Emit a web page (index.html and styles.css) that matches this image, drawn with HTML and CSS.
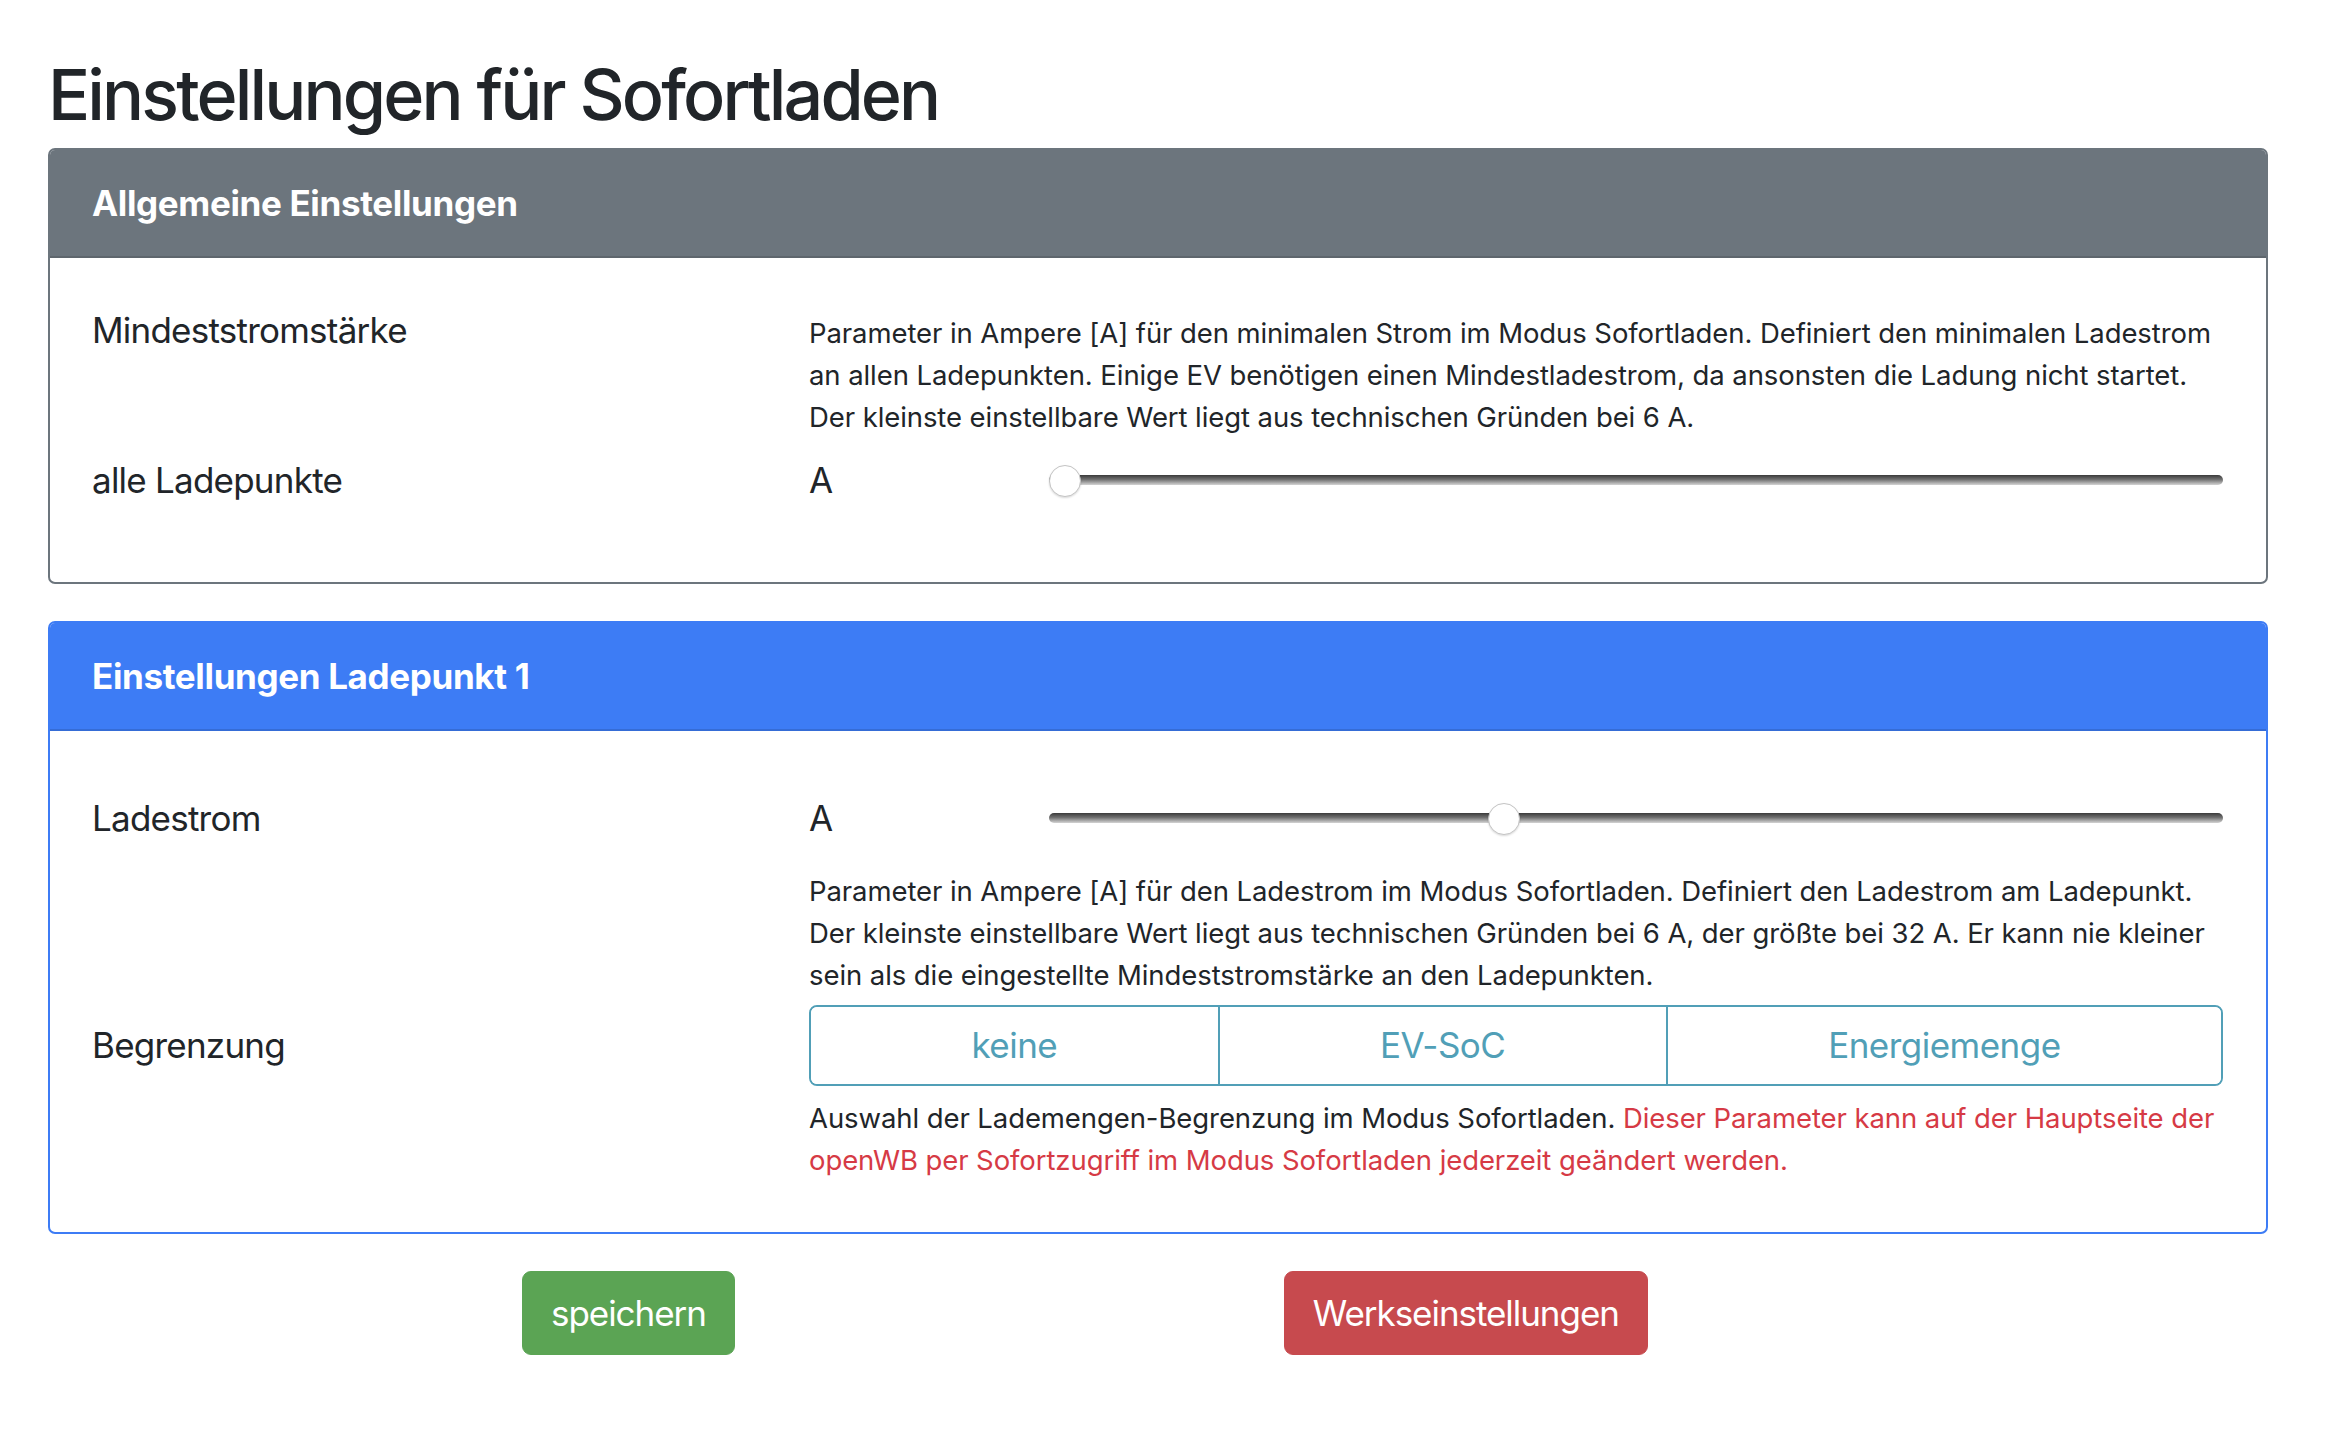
FILE: index.html
```html
<!DOCTYPE html>
<html lang="de">
<head>
<meta charset="utf-8">
<title>Einstellungen für Sofortladen</title>
<link rel="stylesheet" href="styles.css">
</head>
<body>
<main class="page">
  <h1 class="page-title">Einstellungen für Sofortladen</h1>

  <section class="card card--secondary">
    <h2 class="card-header">Allgemeine Einstellungen</h2>
    <div class="card-body card-body--general">
      <div class="form-row">
        <div class="form-label">Mindeststromstärke</div>
        <div class="form-field">
          <p class="help help--top">Parameter in Ampere [A] für den minimalen Strom im Modus Sofortladen. Definiert den minimalen Ladestrom an allen Ladepunkten. Einige EV benötigen einen Mindestladestrom, da ansonsten die Ladung nicht startet. Der kleinste einstellbare Wert liegt aus technischen Gründen bei 6 A.</p>
        </div>
      </div>
      <div class="form-row form-row--next">
        <div class="form-label">alle Ladepunkte</div>
        <div class="form-field">
          <div class="range-row">
            <span class="unit">A</span>
            <input class="slider" type="range" min="6" max="32" value="6" aria-label="Mindeststromstärke alle Ladepunkte">
          </div>
        </div>
      </div>
    </div>
  </section>

  <section class="card card--primary">
    <h2 class="card-header">Einstellungen Ladepunkt 1</h2>
    <div class="card-body card-body--lp">
      <div class="form-row">
        <div class="form-label">Ladestrom</div>
        <div class="form-field">
          <div class="range-row">
            <span class="unit">A</span>
            <input class="slider" type="range" min="6" max="32" value="16" aria-label="Ladestrom">
          </div>
          <p class="help help--below">Parameter in Ampere [A] für den Ladestrom im Modus Sofortladen. Definiert den Ladestrom am Ladepunkt. Der kleinste einstellbare Wert liegt aus technischen Gründen bei 6 A, der größte bei 32 A. Er kann nie kleiner sein als die eingestellte Mindeststromstärke an den Ladepunkten.</p>
        </div>
      </div>
      <div class="form-row form-row--group">
        <div class="form-label form-label--group">Begrenzung</div>
        <div class="form-field">
          <div class="btn-group">
            <button class="btn-choice" type="button">keine</button>
            <button class="btn-choice" type="button">EV-SoC</button>
            <button class="btn-choice" type="button">Energiemenge</button>
          </div>
          <p class="help help--group">Auswahl der Lademengen-Begrenzung im Modus Sofortladen. <span class="text-danger">Dieser Parameter kann auf der Hauptseite der openWB per Sofortzugriff im Modus Sofortladen jederzeit geändert werden.</span></p>
        </div>
      </div>
    </div>
  </section>

  <div class="actions">
    <button class="btn btn--success" type="button">speichern</button>
    <button class="btn btn--danger" type="button">Werkseinstellungen</button>
  </div>
</main>
</body>
</html>
```

FILE: styles.css
```css
* { box-sizing: border-box; }

html, body {
  margin: 0;
  background: #ffffff;
}

body {
  font-family: Inter, "Noto Sans", "Liberation Sans", sans-serif;
  color: #212529;
}

.page {
  padding: 53px 82px 60px 48px;
}

.page-title {
  margin: 0 0 11px 0;
  font-size: 70px;
  line-height: 84px;
  font-weight: 500;
  letter-spacing: -0.041em;
  color: #212529;
}

.card {
  border: 2px solid #6c757d;
  border-radius: 7px;
  overflow: hidden;
  background: #fff;
}

.card + .card {
  margin-top: 37px;
}

.card--secondary { border-color: #6c757d; }
.card--primary { border-color: #3d7cf5; }

.card-header {
  margin: 0;
  padding: 32px 42px;
  font-size: 35px;
  line-height: 42px;
  font-weight: 700;
  letter-spacing: -0.01em;
  color: #ffffff;
  border-bottom: 2px solid rgba(0, 0, 0, 0.125);
}

.card--secondary .card-header { background: #6c757d; }
.card--primary .card-header { background: #3d7cf5; }

.card-body {
  padding: 45px 43px 75px 42px;
}

.card-body--lp {
  padding: 60px 43px 51px 42px;
}

.form-row {
  display: grid;
  grid-template-columns: 717px 1fr;
  align-items: start;
}

.form-row--next { margin-top: 15px; }
.form-row--group { margin-top: 9px; }

.form-label {
  font-size: 35px;
  line-height: 54px;
  letter-spacing: -0.022em;
}

.form-label--group {
  line-height: 81px;
}

.help {
  margin: 0;
  font-size: 27.5px;
  line-height: 42px;
  letter-spacing: -0.003em;
}

.help--top { margin-top: 9px; }
.help--below { margin-top: 25px; }
.help--group { margin-top: 11px; }

.text-danger { color: #d63a45; }

.range-row {
  display: grid;
  grid-template-columns: 240px 1fr;
  align-items: center;
  height: 54px;
}

.unit {
  font-size: 35px;
  line-height: 54px;
}

.slider {
  -webkit-appearance: none;
  appearance: none;
  width: 100%;
  height: 48px;
  margin: 0;
  padding: 0;
  background: transparent;
}

.slider::-webkit-slider-runnable-track {
  height: 10px;
  border-radius: 5px;
  background: linear-gradient(to bottom, #3a3a3a 0%, #707070 45%, #d4d4d4 100%);
}

.slider::-webkit-slider-thumb {
  -webkit-appearance: none;
  appearance: none;
  width: 32px;
  height: 32px;
  margin-top: -10px;
  border-radius: 50%;
  background: #ffffff;
  border: 1px solid #c4c4c4;
  box-shadow: 0 1px 2px rgba(0, 0, 0, 0.15);
}

.btn-group {
  display: flex;
  border: 2px solid #519fb7;
  border-radius: 8px;
  overflow: hidden;
}

.btn-choice {
  flex: 1 1 auto;
  margin: 0;
  padding: 0 20px;
  border: 0;
  background: #fff;
  font-family: inherit;
  font-size: 35px;
  line-height: 77px;
  letter-spacing: -0.015em;
  color: #519fb7;
}

.btn-choice + .btn-choice {
  border-left: 2px solid #519fb7;
}

.actions {
  display: flex;
  gap: 549px;
  margin-top: 37px;
  padding-left: 474px;
}

.btn {
  margin: 0;
  padding: 14px 28px;
  border: 1px solid transparent;
  border-radius: 9px;
  font-family: inherit;
  font-size: 35px;
  line-height: 54px;
  letter-spacing: -0.03em;
  color: #ffffff;
}

.btn--success { background: #5ba454; border-color: #5ba454; }
.btn--danger { background: #c74a4e; border-color: #c74a4e; }
```
